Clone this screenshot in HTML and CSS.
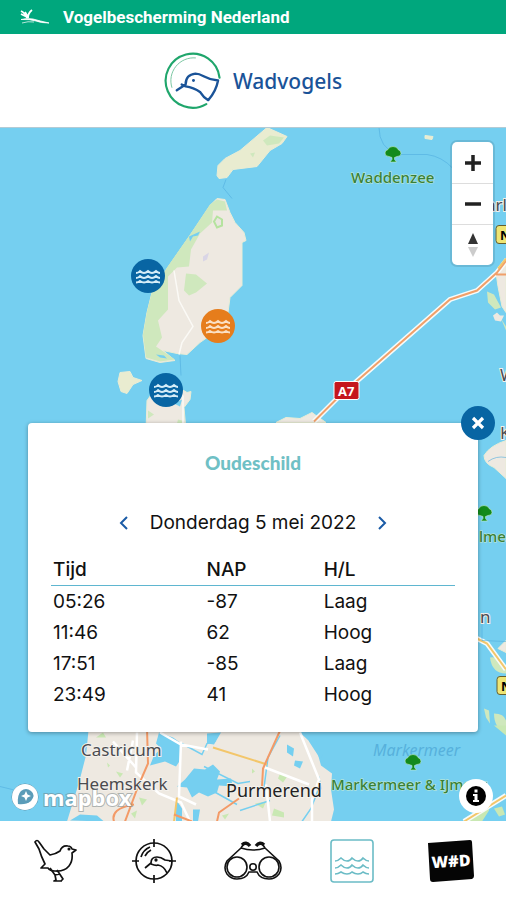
FILE: index.html
```html
<!DOCTYPE html>
<html lang="nl">
<head>
    <meta charset="UTF-8">
    <meta name="viewport" content="width=device-width, initial-scale=1.0">
    <title>Wadvogels</title>
    <link rel="stylesheet" href="styles.css">
</head>
<body>

<!-- shared symbols -->
<svg class="symbols" aria-hidden="true">
    <symbol id="waves" viewBox="0 0 26 16">
        <g fill="none" stroke="currentColor" stroke-width="1.8">
            <path d="M1 5q2.500 0 4-2 2 2 4 2t4-2q2 2 4 2t4-2q2 2 4 2"/>
            <path d="M1 10q2.500 0 4-2 2 2 4 2t4-2q2 2 4 2t4-2q2 2 4 2"/>
            <path d="M1 14.500q2.500 0 4-1.500 2 1.500 4 1.500t4-1.500q2 1.500 4 1.500t4-1.500q2 1.500 4 1.500"/>
        </g>
    </symbol>
    <symbol id="tree" viewBox="0 0 18 18">
        <path fill="#138a1c" stroke="#c5ecc9" stroke-width=".6" d="M4 4q1-3 5-3t5 3q3 1 3 4 0 3-4 3l-2.500 1v2l2 2.500H6L8 14v-2L5 11Q1 11 1 7.500 1 5 4 4z"/>
    </symbol>
</svg>

<header>
    <div class="topbar">
        <svg class="bird-small" viewBox="0 0 30 16" fill="none" stroke="#fff" aria-hidden="true">
            <path d="M2 14q6-2 12-1" stroke-width="1" opacity=".7"/>
            <path d="M1 10.500q6-1.500 12-.5 7 2 16 4-8 0-13-2-6-2-15-1.500z" stroke-width=".8" fill="#fff"/>
            <path d="M1 2q4 2 6 7M5 3l3 5M12 1Q8 4 8 9M1 5l6 3" stroke-width="1.800"/>
        </svg>
        <span>Vogelbescherming Nederland</span>
    </div>
    <div class="brand">
        <svg class="logo" viewBox="0 0 58 58" fill="none" stroke-linecap="round" stroke-linejoin="round" aria-hidden="true">
            <path stroke="#20a66c" stroke-width="2.200" d="M56.500 26A27.500 27.500 0 1 0 43 53"/>
            <path stroke="#79c6a1" stroke-width="1" d="M32 6A23 23 0 0 0 8 36"/>
            <path stroke="#1a5398" stroke-width="2.400" d="M13 39l9-6q0-10 10-11c8 0 9 6 23 7q-2 11-10 20-5-3-8-8-7-5-15-6l-4-2"/>
            <circle cx="30" cy="29" r="1.500" fill="#1a5398"/>
        </svg>
        <h1>Wadvogels</h1>
    </div>
</header>

<main class="map">
    <svg class="map-tiles" viewBox="0 127 506 694" preserveAspectRatio="xMidYMid slice" aria-hidden="true">
        <rect y="127" width="506" height="694" fill="#75cff0"/>

        <!-- islands -->
        <g stroke="#e9edd5" stroke-width="1">
            <path fill="#e9ecd0" d="M217 175l1-10 7-7 15-8 20-17 7-6 20 9-5 7-12 7-13 16-24 3-6 8-8 1z"/>
            <path fill="#eee9e1" d="M217 198l8 1 5 13 5 10 9 10 2 8-4 2v43l-12 12-2 15-18 23-10 7-13 12-10-1-14-3 12 10-15 2-14-4-3-23 4-23 5-20 15-24 23-33 20-30z"/>
            <path fill="#e9ecd0" d="M120 372l10-1 3 6 9 3-9 4-6 9-6-2-3-10z"/>
            <path fill="#eee9e1" d="M146 430l1-30 8-11h27l5 3 4-1-1 8-6 8 2 23zM276 422l10-5 14 1 12-6 4 3 10 7zM506 258l-10 14 2 14 4 20 4 6z"/>
            <path fill="#eee9e1" d="M506 440q-16 5-22 15 0 8 10 12l12 11zM506 640l-8 8 8 4z"/>
            <path fill="#e9ecd0" d="M425 135l8 1-1 3-7-1z"/>
        </g>
        <g fill="#cfe8bd">
            <path d="M217 199l8 2 2 9-14 0-1 12-12 11-9 16-2 17-12 1-9 9v33l-10 11 4 17-6 9 19 13-15 2-14-4-3-23 4-23 5-20 15-24 23-33 20-30z"/>
            <path d="M186 273l10 1 11 9-11 9-7 3-5-5zM263 140l7-5 14 2-5 6-12 2zM250 153l5-1-2 5zM148 410l6 4-6 4zM178 419l4 1v3h-5z"/>
            <path d="M487 291l7 3 7 13-6 2-7-7zM501 318l5 8v4zM490 657q8-2 16 8v8q-14 0-16-16zM484 708l5 2 1 13-4-6zM494 713q10 0 12 7v12q-12-4-12-19z"/>
        </g>
        <path fill="#e9e6e0" stroke="#b5e39f" stroke-width="2" d="M217 216l5 3 0 6-5 2-3-6z"/>
        <path fill="#d9d5e6" d="M203 256l6-4-2 7-4 2z"/>
        <path fill="none" stroke="#fbfaf6" stroke-width="1.500" d="M174 270l5 30 14 26-11 16-3 12M183 395v35"/>
        <path fill="#75cff0" d="M189 236l11-5-2 4-5 1-3 5zM156 354l8 1 3 3-7-1zM174 403l8-4-2 7z"/>
        <path fill="#eee9e1" d="M493 315l4-3 3 3 4 0-3 6-6-1z"/>

        <!-- mainland -->
        <path fill="#eee9e1" d="M89 725l-3 30-7 27-12 39h264l3-12-3-20 1-16-11-8-5-18-15-14-5-13z"/>
        <g fill="#c9e8b3">
            <path d="M96 737l7-5 3 5zM116 771l7 2-3 4zM131 813l6-3-2 8zM139 797l8 2-5 6zM107 762l3 3-2 2zM252 768l3 3-3 2zM280 773l8 2-5 7-5-4zM255 803l11-2-3 7zM274 808l10 4 0 5-12-2zM222 815l7-2-4 6zM289 792l8 1-2 4z"/>
            <path d="M465 821l12-12 12-7v8l-7 11zM494 808l8-2 3 8-6 2zM494 725h12v10z"/>
        </g>
        <g fill="#75cff0">
            <path d="M159 732l14 5 7 5 0 18-4 6-11-5-15 4 4-10 7-7-5-5zM185 779l9-11 11 1 8-5 7 7-3 8 14-1 2 8-14-1-2 7-9 4-9-4-7 5-5-10-10-1zM207 733l14-1-7 12-7-1zM70 820l10-6 17 1 7 6zM176 799l6 9 0 13h-6zM193 809l7 0-2 12h-5zM287 744l7 4-1 8-6-4zM295 760l8 1-3 7-6-3zM307 733l8 5 8 17-3 3-11-17zM319 775l3 13-3 5z"/>
        </g>
        <g fill="none" stroke="#75cff0" stroke-width="1.500">
            <path d="M180 742l22 12 5-11 9-3M204 766l34 17 12-2M280 735l-12 22-4 30M318 790l-7 18-9 13M240 810l30-10M212 790l25 14"/>
        </g>
        <g fill="none" stroke="#fff" stroke-width="2.500">
            <path d="M137 732l-1 40 23 21 22 9 9 19M181 741l-2 55 17 8M160 732l21 12 27 5M300 732l19 47-7 20v22M265 767l44 17M133 740l-6 30M113 741l23 26M266 784l4 37"/>
        </g>
        <g fill="none" stroke="#f7fbfa" stroke-width="5">
            <path d="M314 421l24-24 31-27 81-71 27-9 20-18 10-13"/>
            <path d="M475 637l12 6 19 26M464 821l42-26"/>
        </g>
        <g fill="none" stroke="#f0a06a" stroke-width="2">
            <path d="M314 421l24-24 31-27 81-71 27-9 20-18 10-13M496 274h10"/>
            <path stroke="#f3c66a" d="M475 637l12 6 19 26M213 747l54 17M177 797l-3 24M498 268l8-10M464 821l42-26"/>
            <path stroke="#f39a67" d="M147 728l1 35-10 23-13 35M134 804q-24 4-20 17M281 728l-18 40-1 18M239 798l-20 14-2 9M174 814l18 7"/>
        </g>
        <path fill="none" stroke="#50addf" stroke-width="1" opacity=".6" d="M226 179l-3 8 9 11M379 127q0 20 18 27h30q15 2 26 14M180 355l1 20M0 786q25 5 38 16M488 461q8-6 18-4M482 620v20l24 1"/>

        <!-- place labels -->
        <g class="park">
            <text x="351" y="182">Waddenzee</text>
            <text x="331" y="789">Markermeer &amp; IJmeer</text>
            <text x="479" y="541">lmeer</text>
        </g>
        <g class="place">
            <text x="81" y="755">Castricum</text>
            <text x="77" y="789">Heemskerk</text>
            <text class="town" x="226" y="796">Purmerend</text>
            <text x="486" y="210">arlingen</text>
            <text x="500" y="380">W</text>
            <text x="500" y="438">K</text>
            <text x="480" y="622">n</text>
        </g>
        <text class="sea" x="373" y="755">Markermeer</text>
        <use href="#tree" x="384" y="145" width="18" height="18"/>
        <use href="#tree" x="404" y="753" width="18" height="18"/>
        <use href="#tree" x="475" y="504" width="18" height="18"/>

        <!-- road shields -->
        <g class="shield">
            <rect x="334" y="381" width="25" height="18" rx="2" fill="#c5161d" stroke="#fff"/>
            <text x="338" y="395" fill="#fff">A7</text>
            <rect x="496" y="225" width="24" height="18" rx="3" fill="#eee574" stroke="#655f2f"/>
            <text x="500" y="239">N31</text>
            <rect x="497" y="676" width="24" height="18" rx="3" fill="#eee574" stroke="#655f2f"/>
            <text x="501" y="690">N3</text>
        </g>
    </svg>

    <button class="pin pin-west" aria-label="Texel west"><svg><use href="#waves"/></svg></button>
    <button class="pin pin-active" aria-label="Oudeschild"><svg><use href="#waves"/></svg></button>
    <button class="pin pin-south" aria-label="Den Helder"><svg><use href="#waves"/></svg></button>

    <div class="zoom">
        <button aria-label="Zoom in"><svg viewBox="0 0 20 20"><path d="M10 2v16M2 10h16" stroke="#222" stroke-width="3.500"/></svg></button>
        <button aria-label="Zoom uit"><svg viewBox="0 0 20 20"><path d="M2 10h16" stroke="#222" stroke-width="3.500"/></svg></button>
        <button aria-label="Noorden boven"><svg class="compass" viewBox="0 0 14 28"><path d="M7 2l5 11H2z" fill="#333"/><path d="M7 26l5-10H2z" fill="#ccc"/></svg></button>
    </div>

    <a class="mapbox" href="#" aria-label="mapbox">
        <svg viewBox="0 0 28 28" aria-hidden="true">
            <circle cx="14" cy="14" r="13" fill="#fff" stroke="#5f8fa5"/>
            <path fill="#5b9cb8" d="M7 21q-1-9 3-13 5-4 10 0t0 10q-5 4-13 3z"/>
            <path fill="#fff" d="M15 8l1.500 3.500L20 13l-3.500 1.500L15 18l-1.500-3.500L10 13l3.500-1.500z"/>
        </svg>
        <span>mapbox</span>
    </a>

    <button class="info" aria-label="Informatie">
        <svg viewBox="0 0 20 20" aria-hidden="true">
            <circle cx="10" cy="10" r="10"/>
            <path fill="#fff" d="M8.500 3.500h3v3h-3zM7 8h4.500v6H13v2H7v-2h1.500v-4H7z"/>
        </svg>
    </button>

    <section class="card">
        <button class="close" aria-label="Sluiten">
            <svg viewBox="0 0 14 14"><path d="M2 2l10 10M12 2L2 12" stroke="#fff" stroke-width="3.200"/></svg>
        </button>
        <h2>Oudeschild</h2>
        <div class="day">
            <button aria-label="Vorige dag"><svg viewBox="0 0 10 14"><path d="M8 1L2 7l6 6"/></svg></button>
            <span>Donderdag 5 mei 2022</span>
            <button aria-label="Volgende dag"><svg viewBox="0 0 10 14"><path d="M2 1l6 6-6 6"/></svg></button>
        </div>
        <table>
            <thead>
                <tr><th>Tijd</th><th>NAP</th><th>H/L</th></tr>
            </thead>
            <tbody>
                <tr><td>05:26</td><td>-87</td><td>Laag</td></tr>
                <tr><td>11:46</td><td>62</td><td>Hoog</td></tr>
                <tr><td>17:51</td><td>-85</td><td>Laag</td></tr>
                <tr><td>23:49</td><td>41</td><td>Hoog</td></tr>
            </tbody>
        </table>
    </section>
</main>

<nav>
    <a href="#" aria-label="Vogels">
        <svg viewBox="0 0 44 44" fill="none" stroke="#111" stroke-width="1.700" stroke-linejoin="round">
            <path d="M2 3q2-3 4 0l5 7 6 6q6-1 10-4 2-6 8-5 3 0 4 3l4 1-4 3q1 8-3 13-5 6-14 5-5 0-7-3H8l4-4Q8 17 6 10z"/>
            <path d="M17 29l5 7 1 5-2 1h8M24 31l4 6 2 3-2 2M22 36l5-1"/>
            <circle cx="36" cy="10" r=".7"/>
        </svg>
    </a>
    <a href="#" aria-label="Spotten">
        <svg viewBox="0 0 44 44" fill="none" stroke="#111" stroke-width="1.700">
            <circle cx="22" cy="22" r="18"/>
            <path d="M22 0v8M22 36v8M0 22h7M37 22h7M9 18q2-7 9-10M13 17q2-4 6-6" />
            <path d="M13 29l6-5q0-6 6-6 4 0 8 3l7 1M19 25q5 2 7 1 6 1 9 8"/>
            <circle cx="24" cy="21" r=".8"/>
        </svg>
    </a>
    <a href="#" aria-label="Kijken">
        <svg class="wide" viewBox="0 0 60 44" fill="none" stroke="#111" stroke-width="1.600">
            <circle cx="14" cy="28" r="10"/>
            <circle cx="46" cy="28" r="10"/>
            <path d="M18 9L4 22q-4 7 0 13 4 5 10 5 9 0 12-7h8q3 7 12 7 6 0 10-5 4-6 0-13L42 9M18 9q6 2 12 2t12-2M18 9l2-3M42 9l-2-3"/>
            <circle cx="30" cy="28" r="3.200"/>
            <path d="M19 6q4-4 8 1M33 7q4-5 8-1" stroke-width="3.400"/>
        </svg>
    </a>
    <a href="#" aria-label="Getij" aria-current="page">
        <svg viewBox="0 0 44 44" fill="none" stroke="#6bbcc6" stroke-width="1.600">
            <rect x="1" y="1" width="42" height="42" rx="3"/>
            <path d="M5 22q3 0 6-3 3 3 6 3t5-3q3 3 6 3t5-3q3 3 6 3M5 29q3 0 6-3 3 3 6 3t5-3q3 3 6 3t5-3q3 3 6 3M5 35q3 0 6-2 3 2 6 2t5-2q3 2 6 2t5-2q3 2 6 2"/>
        </svg>
    </a>
    <a href="#" aria-label="WAD">
        <svg class="wad" viewBox="0 0 48 44">
            <path d="M1 4L43 1q2 0 2 2l2 34q0 2-2 3L6 43q-3 0-3-3L1 4z" fill="#050505"/>
            <text x="24" y="28" text-anchor="middle" transform="rotate(-4 24 22)">W#D</text>
        </svg>
    </a>
</nav>

</body>
</html>
```

FILE: styles.css
```css
* {
    box-sizing: border-box;
}

body {
    display: flex;
    flex-direction: column;
    min-height: 100vh;
    margin: 0;
    background: #fff;
    color: #111;
    font-family: Inter, "Noto Sans", sans-serif;
}

button {
    display: flex;
    align-items: center;
    justify-content: center;
    padding: 0;
    border: none;
    background: none;
    cursor: pointer;
}

.symbols {
    position: absolute;
    width: 0;
    height: 0;
}

.topbar {
    display: flex;
    align-items: center;
    gap: 13px;
    height: 34px;
    padding: 0 20px;
    background: #00a77d;
    color: #fff;
    font: bold 17px/20px Roboto, sans-serif;
}

.bird-small {
    width: 30px;
    height: 16px;
}

.brand {
    display: flex;
    align-items: center;
    justify-content: center;
    gap: 12px;
    height: 93px;
}

.logo {
    width: 57px;
    height: 57px;
}

.brand h1 {
    margin: 0;
    color: #1a5398;
    font: 500 21px/28px "Noto Sans", sans-serif;
}

.map {
    position: relative;
    flex: 1;
    min-height: 600px;
    overflow: hidden;
    border-top: 1px solid #b3cbd5;
    background: #75cff0;
}

.map-tiles {
    position: absolute;
    inset: 0;
    width: 100%;
    height: 100%;
    font-family: "Noto Sans", sans-serif;
}

.map-tiles text {
    paint-order: stroke;
}

.park {
    fill: #38803a;
    stroke: #c9ecd0;
    stroke-width: 1px;
    font-size: 15px;
    font-weight: 500;
}

.place {
    fill: #4b4b4f;
    stroke: #f4f1ec;
    stroke-width: 2px;
    font-size: 17px;
}

.place .town {
    fill: #222;
    font-size: 18px;
}

.sea {
    fill: #57b1dc;
    font-size: 16px;
    font-style: italic;
}

.shield {
    font-size: 13px;
    font-weight: bold;
}

.pin {
    position: absolute;
    width: 34px;
    height: 34px;
    border-radius: 50%;
    background: #0865a3;
    color: #d5edf8;
    transform: translate(-50%, -50%);
}

.pin svg {
    width: 26px;
    height: 16px;
}

.pin-west {
    left: 29.2%;
    top: 21.4%;
}

.pin-active {
    left: 43%;
    top: 28.6%;
    background: #e67d1c;
    color: #fbe0c4;
}

.pin-south {
    left: 32.8%;
    top: 37.8%;
}

.zoom {
    position: absolute;
    top: 14px;
    right: 13px;
    width: 41px;
    border-radius: 5px;
    background: #fff;
    box-shadow: 0 0 0 2px rgba(0, 0, 0, 0.1);
}

.zoom button {
    width: 100%;
    height: 41px;
}

.zoom button + button {
    border-top: 1px solid #ddd;
}

.zoom svg {
    width: 20px;
    height: 20px;
}

.zoom .compass {
    width: 14px;
    height: 28px;
}

.mapbox {
    position: absolute;
    left: 11px;
    bottom: 10px;
    display: flex;
    align-items: center;
    gap: 4px;
    color: #fff;
    font: bold 22px/28px "Noto Sans", sans-serif;
    text-decoration: none;
    -webkit-text-stroke: 2px rgba(110, 125, 130, 0.5);
    paint-order: stroke;
}

.mapbox svg {
    width: 28px;
    height: 28px;
}

.info {
    position: absolute;
    right: 13px;
    bottom: 8px;
    width: 34px;
    height: 34px;
    border-radius: 50%;
    background: #fff;
}

.info svg {
    width: 20px;
    height: 20px;
}

.card {
    position: absolute;
    right: 28px;
    bottom: 89px;
    left: 28px;
    padding: 26px 23px 22px;
    border-radius: 4px;
    background: #fff;
    box-shadow: 0 1px 4px rgba(0, 0, 0, 0.35);
}

.card h2 {
    margin: 0 0 34px;
    color: #6fc0c5;
    font: 900 19px/28px Lato, sans-serif;
    text-align: center;
}

.close {
    position: absolute;
    top: -17px;
    right: -17px;
    width: 34px;
    height: 34px;
    border-radius: 50%;
    background: #0865a3;
}

.close svg {
    width: 14px;
    height: 14px;
}

.day {
    display: flex;
    justify-content: center;
    gap: 14px;
    margin-bottom: 19px;
    font-size: 19px;
    line-height: 24px;
}

.day button {
    width: 24px;
    height: 24px;
}

.day svg {
    width: 10px;
    height: 14px;
    fill: none;
    stroke: #1a5ba6;
    stroke-width: 2px;
}

table {
    width: 100%;
    border-collapse: separate;
    border-spacing: 0;
    table-layout: fixed;
    font-size: 19px;
    line-height: 31px;
}

th,
td {
    padding: 0 2px;
    text-align: left;
}

th {
    border-bottom: 1px solid #5fb6d0;
    font-weight: 500;
}

th:first-child {
    width: 38%;
}

th:nth-child(2) {
    width: 29%;
}

nav {
    display: grid;
    grid-template-columns: repeat(5, 1fr);
    height: 79px;
    padding: 0 5px;
}

nav a {
    display: flex;
    align-items: center;
    justify-content: center;
}

nav svg {
    width: 44px;
    height: 44px;
}

nav .wide {
    width: 60px;
}

nav .wad {
    width: 48px;
}

.wad text {
    fill: #fff;
    font: 900 16px "Noto Sans", sans-serif;
}
```
